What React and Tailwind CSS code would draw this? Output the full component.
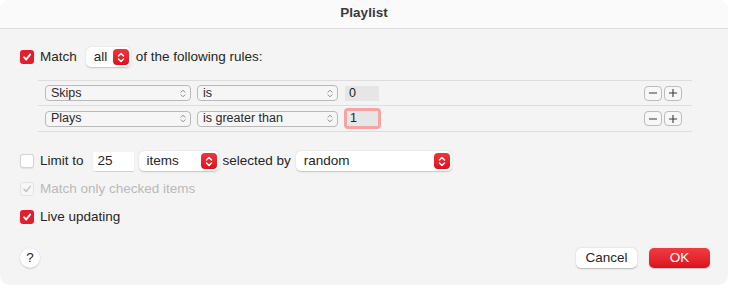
import React from "react";

function Checkbox({ state }) {
  if (state === "on") {
    return (
      <span className="flex h-[14px] w-[14px] shrink-0 items-center justify-center rounded-[3px] bg-[#e41e2b]">
        <svg width="10" height="10" viewBox="0 0 10 10" fill="none">
          <path d="M2 5.2 L4.2 7.5 L8.2 2.4" stroke="white" strokeWidth="1.9" strokeLinecap="round" strokeLinejoin="round" />
        </svg>
      </span>
    );
  }
  if (state === "disabled") {
    return (
      <span className="flex h-[14px] w-[14px] shrink-0 items-center justify-center rounded-[3px] border border-[#e2e2e2] bg-[#f7f7f7]">
        <svg width="10" height="10" viewBox="0 0 10 10" fill="none">
          <path d="M2 5.2 L4.2 7.5 L8.2 2.4" stroke="#c4c4c4" strokeWidth="1.5" strokeLinecap="round" strokeLinejoin="round" />
        </svg>
      </span>
    );
  }
  return <span className="h-[14px] w-[14px] shrink-0 rounded-[3px] border border-[#d4d4d4] bg-white shadow-[0_0.5px_1px_rgba(0,0,0,0.08)]" />;
}

function RedStepper() {
  return (
    <span className="flex h-[16px] w-[16px] items-center justify-center rounded-[4px] bg-gradient-to-b from-[#f0333d] to-[#dc0f1c]">
      <svg width="8" height="11" viewBox="0 0 8 11" fill="none">
        <path d="M1.5 4 L4 1.5 L6.5 4" stroke="white" strokeWidth="1.5" strokeLinecap="round" strokeLinejoin="round" />
        <path d="M1.5 7 L4 9.5 L6.5 7" stroke="white" strokeWidth="1.5" strokeLinecap="round" strokeLinejoin="round" />
      </svg>
    </span>
  );
}

function Popup({ label, className }) {
  return (
    <div className={"flex h-[20px] shrink-0 items-center justify-between rounded-[5px] bg-white pl-[8px] pr-[2px] shadow-[0_0.5px_1.5px_rgba(0,0,0,0.2)] " + className}>
      <span className="text-[13.5px] text-[#262626]">{label}</span>
      <RedStepper />
    </div>
  );
}

function RulePopup({ label, className }) {
  return (
    <div className={"flex h-[16px] items-center justify-between rounded-[4px] border border-[#b9b9b9] bg-[#f6f6f6] pl-[5px] pr-[4px] " + className}>
      <span className="text-[12.5px] leading-none text-[#2a2a2a]">{label}</span>
      <svg width="6" height="9" viewBox="0 0 6 9" fill="none">
        <path d="M1 3.2 L3 1.2 L5 3.2" stroke="#8c8c8c" strokeWidth="1" strokeLinecap="round" strokeLinejoin="round" />
        <path d="M1 5.8 L3 7.8 L5 5.8" stroke="#8c8c8c" strokeWidth="1" strokeLinecap="round" strokeLinejoin="round" />
      </svg>
    </div>
  );
}

function SmallButton({ plus }) {
  return (
    <span className="flex h-[15px] w-[18px] items-center justify-center rounded-[4px] border border-[#bcbcbc] bg-[#f7f7f7]">
      <svg width="10" height="10" viewBox="0 0 10 10" fill="none">
        <path d="M1 5 H9" stroke="#3a3a3a" strokeWidth="1.1" />
        {plus && <path d="M5 1 V9" stroke="#3a3a3a" strokeWidth="1.1" />}
      </svg>
    </span>
  );
}

function Rule({ field, op, value, focused, last }) {
  return (
    <div className={"flex h-[25px] items-center pl-[7px] pr-[10px] " + (last ? "" : "border-b border-[#dddddd]")}>
      <RulePopup label={field} className="w-[146px]" />
      <RulePopup label={op} className="ml-[6px] w-[141px]" />
      {focused ? (
        <div className="ml-[6px] rounded-[4px] border-[3px] border-[#f5a3a3] p-0">
          <div className="flex h-[15px] w-[31px] items-center bg-[#e6e6e6] pl-[3px] text-[12.5px] leading-none text-[#222]">{value}</div>
        </div>
      ) : (
        <div className="ml-[7px] flex h-[15px] w-[34px] items-center bg-[#e6e6e6] pl-[4px] text-[12.5px] leading-none text-[#222]">{value}</div>
      )}
      <div className="ml-auto flex gap-[2px]">
        <SmallButton />
        <SmallButton plus />
      </div>
    </div>
  );
}

export default function App() {
  return (
    <div className="h-[286px] w-[730px] bg-white font-['Liberation_Sans',Arial,sans-serif]">
      <div className="flex h-[285px] w-[728px] flex-col overflow-hidden rounded-[10px] bg-[#f4f4f4]">
        <div className="flex h-[29px] items-center justify-center border-b border-[#dcdcdc] bg-[#fafafa] pb-[2px] text-[13.5px] font-bold text-[#3a3a3a]">
          Playlist
        </div>

        <div className="flex flex-col pl-[20px] pr-[18px]">
          <div className="mt-[18px] flex h-[20px] items-center text-[13.5px] text-[#262626]">
            <Checkbox state="on" />
            <span className="ml-[6px]">Match</span>
            <Popup label="all" className="ml-[9px] w-[45px]" />
            <span className="ml-[5px]">of the following rules:</span>
          </div>

          <div className="ml-[18px] mt-[13px] w-[654px] border-y border-[#dddddd]">
            <Rule field="Skips" op="is" value="0" />
            <Rule field="Plays" op="is greater than" value="1" focused last />
          </div>

          <div className="mt-[19px] flex h-[20px] items-center text-[13.5px] text-[#262626]">
            <Checkbox state="off" />
            <span className="ml-[6px]">Limit to</span>
            <div className="ml-[9px] flex h-[19px] w-[41px] items-center bg-white pl-[5px] shadow-[0_0.5px_1px_rgba(0,0,0,0.15)]">25</div>
            <Popup label="items" className="ml-[5px] w-[80px]" />
            <span className="ml-[4px]">selected by</span>
            <Popup label="random" className="ml-[5px] w-[156px]" />
          </div>

          <div className="mt-[8px] flex h-[20px] items-center text-[13.5px] text-[#b9b9b9]">
            <Checkbox state="disabled" />
            <span className="ml-[6px]">Match only checked items</span>
          </div>

          <div className="mt-[8px] flex h-[20px] items-center text-[13.5px] text-[#262626]">
            <Checkbox state="on" />
            <span className="ml-[6px]">Live updating</span>
          </div>

          <div className="mt-[21px] flex h-[20px] items-center">
            <span className="flex h-[20px] w-[20px] items-center justify-center rounded-full bg-white text-[13.5px] text-[#262626] shadow-[0_0.5px_1.5px_rgba(0,0,0,0.25)]">?</span>
            <button className="ml-auto h-[20px] w-[61px] rounded-[5px] bg-white text-[13.5px] text-[#262626] shadow-[0_0.5px_1.5px_rgba(0,0,0,0.25)]">Cancel</button>
            <button className="ml-[12px] h-[20px] w-[61px] rounded-[5px] bg-gradient-to-b from-[#f03a42] to-[#dc0e1b] text-[13.5px] text-white shadow-[0_0.5px_1px_rgba(0,0,0,0.2)]">OK</button>
          </div>
        </div>
      </div>
    </div>
  );
}
